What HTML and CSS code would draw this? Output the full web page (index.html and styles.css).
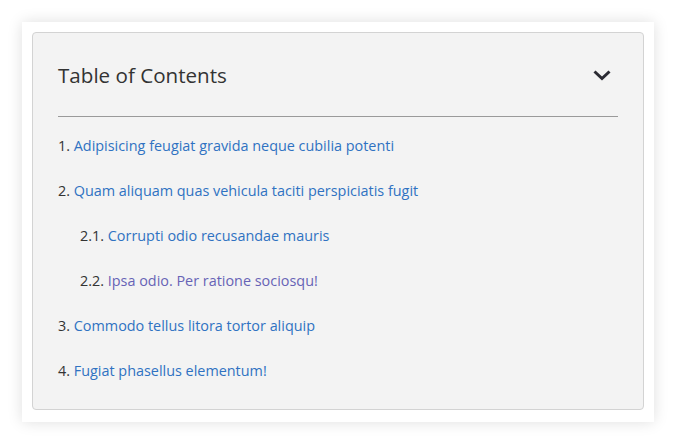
FILE: index.html
```html
<!DOCTYPE html>
<html lang="en">
<head>
<meta charset="utf-8">
<title>Table of Contents</title>
<link rel="stylesheet" href="styles.css">
</head>
<body>
<div class="card">
  <nav class="toc">
    <div class="toc-header">
      <h2 class="toc-title">Table of Contents</h2>
      <svg class="toc-toggle" width="24" height="24" viewBox="0 0 24 24" aria-hidden="true">
        <polyline points="4.5,8.5 12,15.5 19.5,8.5" fill="none" stroke="#2b2b33" stroke-width="3" stroke-linecap="butt" stroke-linejoin="miter"/>
      </svg>
    </div>
    <ol class="toc-list">
      <li><span class="num">1.</span> <a href="#" class="link">Adipisicing feugiat gravida neque cubilia potenti</a></li>
      <li><span class="num">2.</span> <a href="#" class="link">Quam aliquam quas vehicula taciti perspiciatis fugit</a>
        <ol class="toc-sub">
          <li><span class="num">2.1.</span> <a href="#" class="link">Corrupti odio recusandae mauris</a></li>
          <li><span class="num">2.2.</span> <a href="#" class="link visited">Ipsa odio. Per ratione sociosqu!</a></li>
        </ol>
      </li>
      <li><span class="num">3.</span> <a href="#" class="link">Commodo tellus litora tortor aliquip</a></li>
      <li><span class="num">4.</span> <a href="#" class="link">Fugiat phasellus elementum!</a></li>
    </ol>
  </nav>
</div>
</body>
</html>
```
FILE: styles.css
```css
* { box-sizing: border-box; }
html, body { margin: 0; padding: 0; background: #fff; }
body {
  font-family: "Open Sans", "Noto Sans", sans-serif;
  color: #333;
  min-height: 445px;
  padding: 22px 0 23px 22px;
}
.card {
  width: 632px;
  height: 400px;
  padding: 10px 10px 12px;
  background: #fff;
  box-shadow: 0 0 14px rgba(0, 0, 0, 0.13);
}
.toc {
  height: 100%;
  background: #f3f3f3;
  border: 1px solid #d3d3d3;
  border-radius: 4px;
  padding: 0 25px;
}
.toc-header {
  display: flex;
  align-items: center;
  justify-content: space-between;
  padding: 27px 0 26px;
  border-bottom: 1px solid #9a9a9a;
}
.toc-title {
  margin: 0;
  font-size: 20.6px;
  line-height: 30px;
  font-weight: 400;
  color: #333;
}
.toc-toggle { margin-right: 4px; }
.toc-list {
  list-style: none;
  margin: 0;
  padding: 6px 0 0;
}
.toc-list li {
  font-size: 14.4px;
  line-height: 21px;
}
.toc-list > li { padding: 12px 0; }
.toc-sub {
  list-style: none;
  margin: 0;
  padding: 0 0 0 22px;
}
.toc-sub > li { padding-top: 24px; }
.num { color: #333; }
.link { color: #2f72c2; text-decoration: none; }
.link.visited { color: #6763b6; }
```
